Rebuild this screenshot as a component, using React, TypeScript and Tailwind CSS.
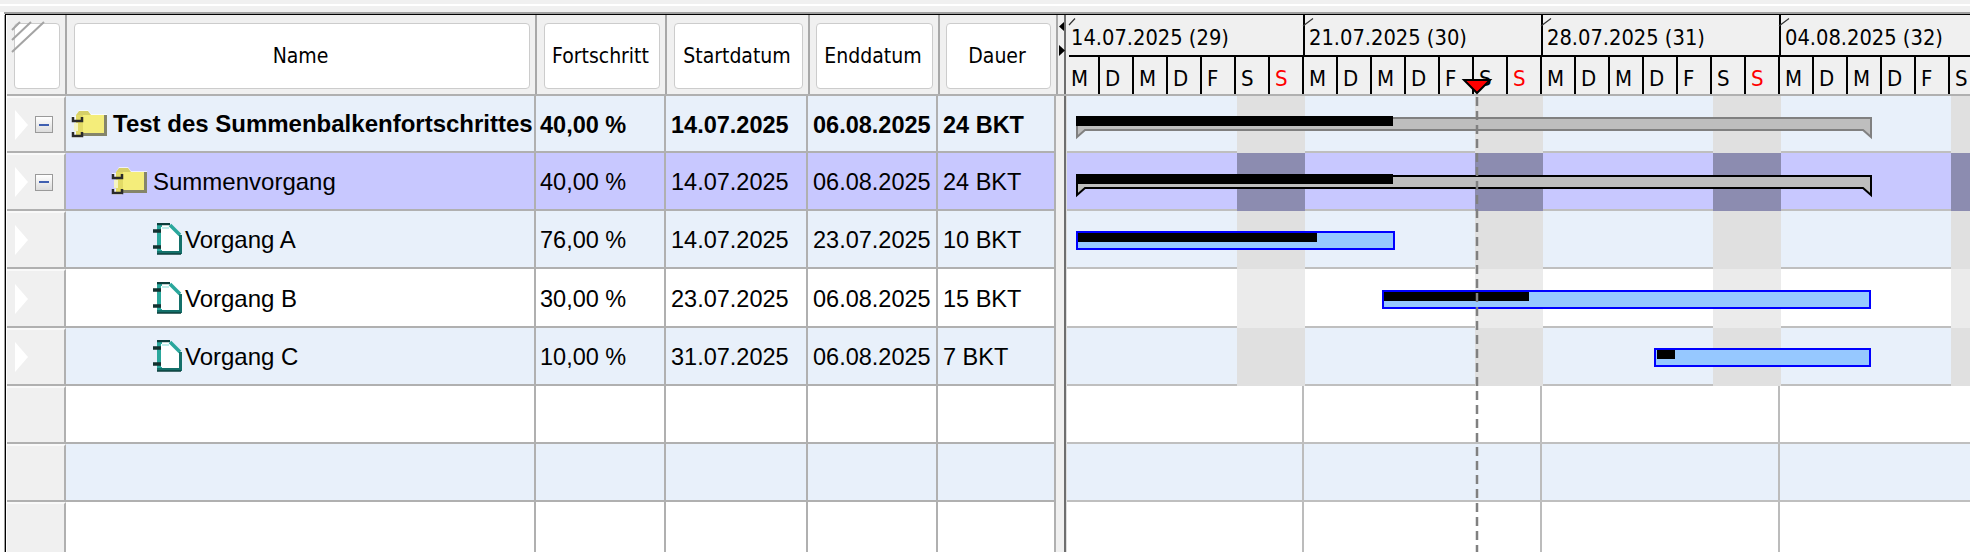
import React from 'react';

const uiFont = "font-['DejaVu_Sans',sans-serif] font-stretch-condensed";

const days = ['M', 'D', 'M', 'D', 'F', 'S', 'S'];
const weeks = ['14.07.2025 (29)', '21.07.2025 (30)', '28.07.2025 (31)', '04.08.2025 (32)'];

interface Task {
  name: string;
  progress: string;
  start: string;
  end: string;
  duration: string;
  indent: number;
  icon: 'folder' | 'task';
  bold?: boolean;
}

const tasks: Task[] = [
  { name: 'Test des Summenbalkenfortschrittes', progress: '40,00 %', start: '14.07.2025', end: '06.08.2025', duration: '24 BKT', indent: 5, icon: 'folder', bold: true },
  { name: 'Summenvorgang', progress: '40,00 %', start: '14.07.2025', end: '06.08.2025', duration: '24 BKT', indent: 45, icon: 'folder' },
  { name: 'Vorgang A', progress: '76,00 %', start: '14.07.2025', end: '23.07.2025', duration: '10 BKT', indent: 86, icon: 'task' },
  { name: 'Vorgang B', progress: '30,00 %', start: '23.07.2025', end: '06.08.2025', duration: '15 BKT', indent: 86, icon: 'task' },
  { name: 'Vorgang C', progress: '10,00 %', start: '31.07.2025', end: '06.08.2025', duration: '7 BKT', indent: 86, icon: 'task' },
];

const FolderIcon = () => (
  <svg width="36" height="28" viewBox="0 0 36 28" className="shrink-0">
    <path d="M5 5 L8 0 H17 L20 4 H36 V26 H11 V28 H1 V22 H5 V12 H1 V6 H5 Z" fill="#ffffff" fillOpacity="0.7" />
    <path d="M5 5 L8 1 H17 L20 5 Z" fill="#d6cf68" />
    <rect x="5" y="5" width="29" height="19" fill="#f4ed7a" />
    <rect x="5" y="5" width="7" height="21" fill="#e2da66" />
    <rect x="33" y="5" width="3" height="21" fill="#85856a" />
    <rect x="12" y="23" width="24" height="3" fill="#85856a" />
    <path d="M2 7 V11 H11 V7" fill="none" stroke="#2a2a2a" strokeWidth="2.5" />
    <path d="M2 22 V26 H11 V22" fill="none" stroke="#2a2a2a" strokeWidth="2.5" />
    <rect x="3" y="13" width="4" height="8" fill="#f4f4c4" />
  </svg>
);

const TaskIcon = () => (
  <svg width="30" height="32" viewBox="0 0 30 32" className="shrink-0">
    <path d="M5 1 H18 L29 12 V30 H5 Z" fill="#ffffff" />
    <rect x="5" y="2" width="5" height="27" fill="#2aa79c" />
    <path d="M9 4 H16 L26 14 V27 H9 Z" fill="#ffffff" />
    <path d="M10 4 H17 V6 H10 Z" fill="#bfeeea" />
    <path d="M5 1 H18" stroke="#0c3f3c" strokeWidth="2.5" fill="none" />
    <path d="M18 2 L28 12" stroke="#2aa79c" strokeWidth="3.5" fill="none" />
    <path d="M5 29.5 H28.5 V12" stroke="#14706a" strokeWidth="3" fill="none" />
    <path d="M5 31 H29" stroke="#0c3f3c" strokeWidth="1.5" fill="none" />
    <path d="M1 8 H9 M1 24 H9" stroke="#12312f" strokeWidth="3.5" fill="none" />
  </svg>
);

const Gutter = ({ toggle, arrow }: { toggle?: boolean; arrow?: boolean }) => (
  <div className="flex h-full w-[59px] shrink-0 items-center border-r-2 border-b-2 border-t-2 border-r-[#b0b0b0] border-b-[#b0b0b0] border-t-[#f9f9f9] bg-[#f0f0f0] pl-[8px]">
    {arrow && (
      <svg width="13" height="30" viewBox="0 0 13 30" className="shrink-0">
        <polygon points="0,0 13,15 0,30" fill="#ffffff" />
      </svg>
    )}
    {toggle && (
      <div className="ml-[7px] flex h-[17px] w-[18px] items-center justify-center border border-[#9a9a9a] bg-linear-to-b from-white to-[#dcdcdc]">
        <div className="h-[2px] w-[10px] bg-[#3f5fb0]" />
      </div>
    )}
  </div>
);

// one row of the gantt area; stripes run over the row separator
const ChartRow = ({ rowBg, stripeBg, line }: { rowBg: string; stripeBg?: string; line: string }) => {
  if (!stripeBg) {
    return (
      <div className={`flex h-full flex-1 border-b-2 ${line} ${rowBg}`}>
        <div className="h-full w-[237px] shrink-0 border-r-2 border-[#bcbcbc]" />
        <div className="h-full w-[238px] shrink-0 border-r-2 border-[#bcbcbc]" />
        <div className="h-full w-[238px] shrink-0 border-r-2 border-[#bcbcbc]" />
      </div>
    );
  }
  return (
    <div className="flex h-full flex-1">
      {[0, 1, 2, 3].map((i) => (
        <React.Fragment key={i}>
          <div className={`h-full w-[170px] shrink-0 border-b-2 ${line} ${rowBg}`} />
          <div className={`h-full ${i === 3 ? 'flex-1' : 'w-[68px] shrink-0'} ${stripeBg}`} />
        </React.Fragment>
      ))}
    </div>
  );
};

const Splitter = () => (
  <div className="flex h-full w-[11px] shrink-0 bg-[#f0f0f0]">
    <div className="ml-[8px] h-full w-[2px] bg-[#6e6e6e]" />
    <div className="h-full w-[1px] bg-[#dddddd]" />
  </div>
);

const Row = ({
  height,
  bg,
  stripeBg,
  task,
}: {
  height: string;
  bg: string;
  stripeBg?: string;
  task?: Task;
}) => (
  <div className={`flex ${height} ml-[1px] shrink-0 font-['Liberation_Sans',Arial,sans-serif] text-[23.5px] text-black ${task?.bold ? 'font-bold' : ''}`}>
    <Gutter toggle={task?.icon === 'folder'} arrow={!!task} />
    <div className={`flex h-full w-[990px] shrink-0 border-b-2 border-[#b0b0b0] ${bg}`}>
      <div className="flex h-full w-[470px] shrink-0 items-center border-r-2 border-[#b0b0b0]" style={{ paddingLeft: task?.indent ?? 0 }}>
        {task?.icon === 'folder' && <FolderIcon />}
        {task?.icon === 'task' && <TaskIcon />}
        {task && (
          <span className={`whitespace-nowrap text-[24px] ${task.icon === 'folder' ? 'ml-[6px]' : 'ml-[3px]'} ${task.bold ? '' : 'pt-[2px]'}`}>
            {task.name}
          </span>
        )}
      </div>
      <div className="flex h-full w-[130px] shrink-0 items-center border-r-2 border-[#b0b0b0] pl-[4px] pt-1 whitespace-nowrap">{task?.progress}</div>
      <div className="flex h-full w-[142px] shrink-0 items-center border-r-2 border-[#b0b0b0] pl-[5px] pt-1 whitespace-nowrap">{task?.start}</div>
      <div className="flex h-full w-[130px] shrink-0 items-center border-r-2 border-[#b0b0b0] pl-[5px] pt-1 whitespace-nowrap">{task?.end}</div>
      <div className="flex h-full w-[118px] shrink-0 items-center border-r-2 border-[#b0b0b0] pl-[5px] pt-1 whitespace-nowrap">{task?.duration}</div>
    </div>
    <Splitter />
    <ChartRow rowBg={bg} stripeBg={stripeBg} line="border-[#bfbfbf]" />
  </div>
);

const HeaderCell = ({ width, pad, label }: { width: string; pad: string; label?: string }) => (
  <div className={`flex h-full ${width} ${pad} shrink-0 border-r-2 border-[#a8a8a8] bg-[#f0f0f0] pb-[5px] pr-[5px] pt-[8px]`}>
    <div className={`flex flex-1 items-center justify-center rounded-[4px] border border-[#cccccc] bg-white pr-[3px] pt-[2px] text-[21px] text-black ${uiFont}`}>
      {label}
    </div>
  </div>
);

export default function App() {
  return (
    <div className="relative h-[552px] w-[1970px] overflow-hidden bg-white">
      <div className="h-[4px] bg-[#f0f0f0]" />
      <div className="h-[2px] bg-white" />
      <div className="h-[6px] bg-[#f0f0f0]" />
      <div className="ml-[4px] h-[2px] bg-[#a0a0a0]" />
      <div className="ml-[5px] h-[1px] bg-black" />

      <div className="ml-[4px] flex h-[537px] flex-col border-l border-[#a0a0a0]">
        <div className="flex h-full flex-col border-l border-black">
          {/* header */}
          <div className="flex h-[81px] shrink-0 flex-col pl-[1px]">
            <div className="flex h-[79px] shrink-0 bg-[#f0f0f0]">
              <HeaderCell width="w-[60px]" pad="pl-[7px]" />
              <HeaderCell width="w-[470px]" pad="pl-[7px]" label="Name" />
              <HeaderCell width="w-[130px]" pad="pl-[7px]" label="Fortschritt" />
              <HeaderCell width="w-[143px]" pad="pl-[7px]" label="Startdatum" />
              <HeaderCell width="w-[130px]" pad="pl-[6px]" label="Enddatum" />
              <HeaderCell width="w-[118px]" pad="pl-[6px]" label="Dauer" />
              <div className="h-full w-[6px] shrink-0" />
              <div className="h-full w-[2px] shrink-0 bg-[#6e6e6e]" />
              <div className={`flex-1 overflow-hidden pl-[3px] ${uiFont} text-black`}>
                <div className="flex h-[42px] border-b-2 border-black">
                  {weeks.map((week, i) => (
                    <div
                      key={week}
                      className={`h-full shrink-0 whitespace-nowrap pt-[9px] text-[21.7px] leading-[28px] ${i === 0 ? 'w-[234px] pl-[2px]' : 'w-[238px] border-l-2 border-black pl-[4px]'}`}
                    >
                      {week}
                    </div>
                  ))}
                </div>
                <div className="flex h-[37px]">
                  {[0, 1, 2, 3].flatMap((w) =>
                    days.map((d, i) => (
                      <div
                        key={`${w}-${i}`}
                        className={`h-full shrink-0 border-r-2 border-black pt-[8px] text-[22px] leading-[28px] ${w === 0 && i === 0 ? 'w-[31px] pl-[2px]' : 'w-[34px] pl-[5px]'} ${i === 6 ? 'text-[#ff0000]' : ''}`}
                      >
                        {d}
                      </div>
                    ))
                  )}
                </div>
              </div>
            </div>
            <div className="h-[2px] shrink-0 bg-[#b0b0b0]" />
          </div>

          {/* rows */}
          <Row height="h-[57px]" bg="bg-[#e8f0fa]" stripeBg="bg-[#e0e0e0]" task={tasks[0]} />
          <Row height="h-[58px]" bg="bg-[#c8c8ff]" stripeBg="bg-[#8c8cb0]" task={tasks[1]} />
          <Row height="h-[58px]" bg="bg-[#e8f0fa]" stripeBg="bg-[#e0e0e0]" task={tasks[2]} />
          <Row height="h-[59px]" bg="bg-white" stripeBg="bg-[#ebebeb]" task={tasks[3]} />
          <Row height="h-[58px]" bg="bg-[#e8f0fa]" stripeBg="bg-[#e0e0e0]" task={tasks[4]} />
          <Row height="h-[58px]" bg="bg-white" />
          <Row height="h-[58px]" bg="bg-[#e8f0fa]" />
          <Row height="h-[58px]" bg="bg-white" />
        </div>
      </div>

      {/* corner hatch of the header */}
      <svg className="absolute left-[10px] top-[20px]" width="36" height="34" viewBox="10 20 36 34">
        <path d="M12 30 L20 22 M12 40 L31 22 M12 52 L44 22" stroke="#a4a4a4" strokeWidth="2" fill="none" />
      </svg>

      {/* splitter arrows */}
      <svg className="absolute left-[1058px] top-[20px]" width="8" height="38" viewBox="1058 20 8 38">
        <polygon points="1064,22 1059,26.5 1064,31" fill="#000000" />
        <polygon points="1059,45 1065,50.5 1059,56" fill="#000000" />
      </svg>

      {/* week tick flags */}
      <svg className="absolute left-[1067px] top-[15px]" width="903" height="15" viewBox="1067 15 903 15">
        <path d="M1069 25 L1075 18.5 M1303 26 L1313 18.5 M1541 26 L1551 18.5 M1779 26 L1789 18.5" stroke="#333333" strokeWidth="1.2" fill="none" />
      </svg>

      {/* gantt bars drawn over the chart rows */}
      <svg className="absolute left-[1067px] top-[76px]" width="903" height="476" viewBox="1067 76 903 476">
        <path d="M1077 118 H1871 V137 L1863 130 H1085 L1077 137 Z" fill="#bebebe" stroke="#808080" strokeWidth="2" />
        <rect x="1076" y="116" width="317" height="10" fill="#000000" />
        <path d="M1077 176 H1871 V195 L1863 188 H1085 L1077 195 Z" fill="#bebebe" stroke="#000000" strokeWidth="2" />
        <rect x="1076" y="174" width="317" height="10" fill="#000000" />

        <rect x="1077" y="232" width="317" height="17" fill="#96c8ff" stroke="#0000ff" strokeWidth="2" />
        <rect x="1078" y="233" width="239" height="9" fill="#000000" />
        <rect x="1383" y="291" width="487" height="17" fill="#96c8ff" stroke="#0000ff" strokeWidth="2" />
        <rect x="1384" y="292" width="145" height="9" fill="#000000" />
        <rect x="1655" y="349" width="215" height="17" fill="#96c8ff" stroke="#0000ff" strokeWidth="2" />
        <rect x="1657" y="350" width="18" height="9" fill="#000000" />

        <line x1="1477" y1="97" x2="1477" y2="552" stroke="#808080" strokeWidth="2.5" strokeDasharray="9 5" />
        <polygon points="1464,80 1490,80 1477,93" fill="#ff0000" stroke="#000000" strokeWidth="2" strokeLinejoin="miter" />
      </svg>
    </div>
  );
}
